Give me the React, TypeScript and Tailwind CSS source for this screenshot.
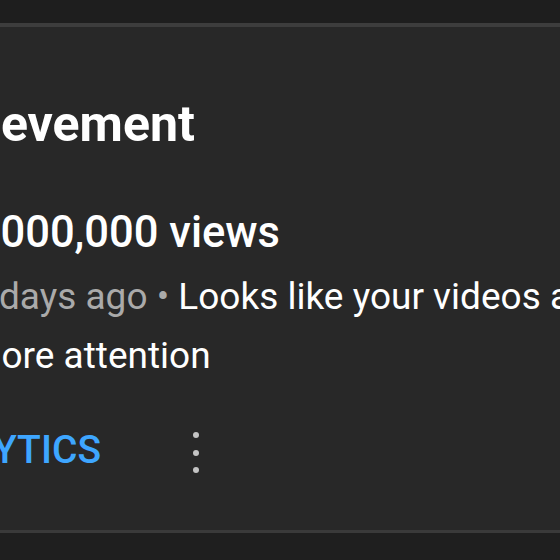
import React from "react";

export default function App() {
  const font = { fontFamily: "Roboto, 'Noto Sans', Arial, sans-serif" };
  return (
    <div className="w-[560px] h-[560px] overflow-hidden bg-[#1f1f1f] flex flex-col" style={font}>
      <div className="h-[23px] bg-[#1e1e1e]" />
      <div className="h-[4px] bg-[#3d3d3d]" />
      <div className="h-[503px] bg-[#282828] overflow-hidden flex flex-col pt-[67px]">
        <div className="ml-[-100px] whitespace-nowrap text-[50px] leading-[60px] font-bold text-white">
          Achievement
        </div>
        <div className="mt-[53px] ml-[-34px] whitespace-nowrap text-[43.5px] leading-[52px] font-medium text-white">
          1,000,000 views
        </div>
        <div className="mt-[8px] ml-[-31px] whitespace-nowrap text-[37px] leading-[59px] text-white">
          <span className="text-[#aaaaaa]">3 days ago</span>
          <span className="text-[#aaaaaa]"> • </span>
          <span>Looks like your videos are getting</span>
          <br />
          <span>more attention</span>
        </div>
        <div className="mt-[42px] flex items-center">
          <div className="ml-[-103px] whitespace-nowrap text-[39px] leading-[44px] font-medium text-[#3ea6ff]">
            ANALYTICS
          </div>
          <div className="ml-[92px] flex flex-col gap-[11.5px] pt-[5px]">
            <div className="w-[6px] h-[6px] rounded-full bg-[#c4c4c4]" />
            <div className="w-[6px] h-[6px] rounded-full bg-[#c4c4c4]" />
            <div className="w-[6px] h-[6px] rounded-full bg-[#c4c4c4]" />
          </div>
        </div>
      </div>
      <div className="h-[3px] bg-[#3a3a3a]" />
      <div className="flex-1 bg-[#1f1f1f]" />
    </div>
  );
}
